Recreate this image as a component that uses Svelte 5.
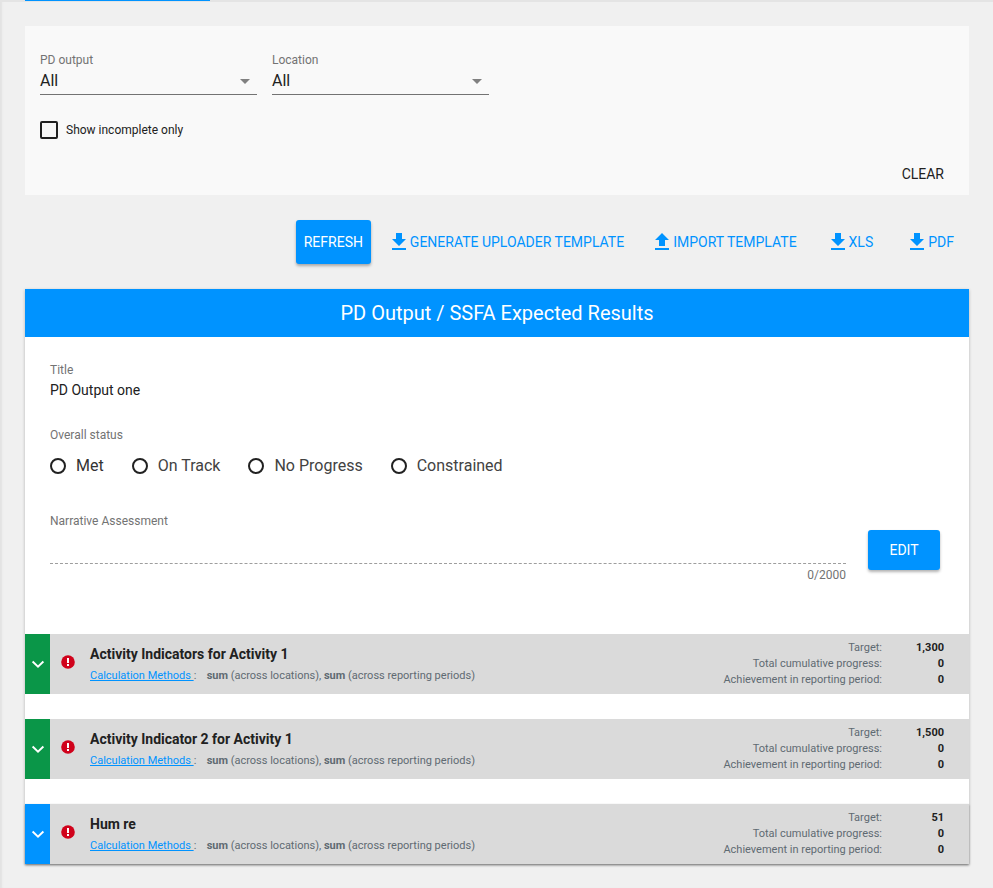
<script>
  const dl = "M19 9h-4V3H9v6H5l7 7 7-7zM5 18v2h14v-2H5z";
  const ul = "M9 16h6v-6h4l-7-7-7 7h4v6zM5 18v2h14v-2H5z";
  const actions = [
    { label: "GENERATE UPLOADER TEMPLATE", d: dl },
    { label: "IMPORT TEMPLATE", d: ul },
    { label: "XLS", d: dl },
    { label: "PDF", d: dl }
  ];
  const statuses = ["Met", "On Track", "No Progress", "Constrained"];
  const rows = [
    { title: "Activity Indicators for Activity 1", target: "1,300", color: "green" },
    { title: "Activity Indicator 2 for Activity 1", target: "1,500", color: "green" },
    { title: "Hum re", target: "51", color: "blue" }
  ];
</script>

<div class="page">
  <div class="topbar"><div class="tab"></div></div>

  <main class="main">
    <section class="filters">
      <div class="selects">
        <div class="select">
          <div class="sel-label">PD output</div>
          <div class="sel-value">All<span class="caret"></span></div>
        </div>
        <div class="select">
          <div class="sel-label">Location</div>
          <div class="sel-value">All<span class="caret"></span></div>
        </div>
      </div>
      <div class="check"><span class="box"></span>Show incomplete only</div>
      <div class="clear-row"><span class="clear">CLEAR</span></div>
    </section>

    <div class="toolbar">
      <button class="raised refresh">REFRESH</button>
      {#each actions as a}
        <span class="action">
          <svg viewBox="0 0 24 24" width="24" height="24"><path d={a.d} fill="currentColor" /></svg>{a.label}
        </span>
      {/each}
    </div>

    <section class="card">
      <header class="card-head">PD Output / SSFA Expected Results</header>
      <div class="card-body">
        <div class="label">Title</div>
        <div class="title-val">PD Output one</div>
        <div class="label status-label">Overall status</div>
        <div class="radios">
          {#each statuses as s}
            <span class="radio"><span class="ring"></span>{s}</span>
          {/each}
        </div>
        <div class="narr">
          <div class="narr-field">
            <div class="label">Narrative Assessment</div>
            <div class="dash"></div>
            <div class="count">0/2000</div>
          </div>
          <button class="raised edit">EDIT</button>
        </div>
      </div>

      <div class="rows">
        {#each rows as r}
          <div class="row">
            <div class="toggle {r.color}">
              <svg viewBox="0 0 14 14" width="14" height="14"><path d="M1.6 4.5 7 9.7l5.4-5.2" fill="none" stroke="#fff" stroke-width="1.9" /></svg>
            </div>
            <svg class="alert" viewBox="0 0 14 14" width="14" height="14">
              <circle cx="7" cy="7" r="6.8" fill="#d0021b" />
              <rect x="6" y="3" width="2" height="5" fill="#fff" />
              <rect x="6" y="9" width="2" height="2" fill="#fff" />
            </svg>
            <div class="info">
              <div class="row-title">{r.title}</div>
              <div class="methods"><span class="link">Calculation Methods&nbsp;</span><span class="colon">:</span><b>sum</b> (across locations), <b>sum</b> (across reporting periods)</div>
            </div>
            <div class="stats">
              <span class="k">Target:</span><span class="v">{r.target}</span>
              <span class="k">Total cumulative progress:</span><span class="v">0</span>
              <span class="k">Achievement in reporting period:</span><span class="v">0</span>
            </div>
          </div>
        {/each}
      </div>
    </section>
  </main>
</div>

<style>
  :global(body) {
    margin: 0;
    background: #f0f0f0;
    font-family: Roboto, "Noto Sans", sans-serif;
    color: #212121;
  }
  .page {
    height: 888px;
    overflow: hidden;
    box-shadow: inset 3px 0 2px -1px #e2e2e2;
  }
  .topbar {
    height: 2px;
    background: #e4e4e4;
    padding-left: 25px;
  }
  .tab {
    width: 185px;
    height: 1px;
    background: #0093ff;
  }
  .main {
    padding: 24px 24px 0 25px;
  }
  .filters {
    height: 169px;
    box-sizing: border-box;
    background: #f9f9f9;
    padding: 27px 25px 0 15px;
    display: flex;
    flex-direction: column;
  }
  .selects {
    display: flex;
    gap: 15px;
  }
  .select {
    width: 217px;
  }
  .sel-label {
    font-size: 12px;
    line-height: 14px;
    color: #737373;
  }
  .sel-value {
    height: 27px;
    line-height: 28px;
    font-size: 16px;
    border-bottom: 1px solid #737373;
    position: relative;
  }
  .caret {
    position: absolute;
    right: 7px;
    top: 12px;
    border-left: 5px solid transparent;
    border-right: 5px solid transparent;
    border-top: 5px solid #808080;
  }
  .check {
    margin-top: 26px;
    display: flex;
    align-items: center;
    font-size: 12px;
    line-height: 18px;
    gap: 8px;
  }
  .box {
    width: 14px;
    height: 14px;
    border: 2px solid #212121;
    border-radius: 2px;
  }
  .clear-row {
    margin-top: 25px;
    text-align: right;
  }
  .clear {
    font-size: 14px;
    line-height: 16px;
  }
  .toolbar {
    margin-top: 25px;
    height: 44px;
    display: flex;
    align-items: center;
    justify-content: flex-end;
  }
  .raised {
    border: 0;
    padding: 0;
    background: #0093ff;
    color: #fff;
    border-radius: 3px;
    font: 14px Roboto, sans-serif;
    box-shadow: 0 2px 3px rgba(0, 0, 0, 0.3);
  }
  .refresh {
    width: 75px;
    height: 44px;
    margin-right: 20px;
  }
  .action {
    display: flex;
    align-items: center;
    color: #0093ff;
    font-size: 14px;
    margin-right: 15px;
  }
  .action:nth-of-type(2) {
    margin-left: 15px;
  }
  .action:nth-of-type(3) {
    margin-left: 18px;
  }
  .action:nth-of-type(4) {
    margin-left: 21px;
  }
  .action svg {
    width: 24px;
    height: 24px;
    margin-right: -1px;
    margin-left: -4px;
  }
  .card {
    margin-top: 25px;
    background: #fff;
    box-shadow: 0 1px 3px rgba(0, 0, 0, 0.25);
  }
  .card-head {
    height: 48px;
    background: #0093ff;
    color: #fff;
    font-size: 20px;
    line-height: 48px;
    text-align: center;
  }
  .card-body {
    padding: 26px 29px 0 25px;
    height: 297px;
    box-sizing: border-box;
  }
  .label {
    font-size: 12px;
    line-height: 14px;
    color: #737373;
  }
  .title-val {
    font-size: 14px;
    line-height: 20px;
    margin-top: 3px;
  }
  .status-label {
    margin-top: 28px;
  }
  .radios {
    display: flex;
    margin-top: 12px;
    font-size: 16px;
    line-height: 24px;
    color: #424242;
  }
  .radio {
    display: flex;
    align-items: center;
    gap: 10px;
    margin-right: 28px;
  }
  .radio:first-child {
    color: #333;
  }
  .ring {
    width: 12px;
    height: 12px;
    border: 2px solid #212121;
    border-radius: 50%;
  }
  .narr {
    display: flex;
    margin-top: 36px;
    align-items: flex-start;
  }
  .narr-field {
    width: 796px;
  }
  .dash {
    margin-top: 35px;
    border-top: 1px dashed #9e9e9e;
  }
  .count {
    margin-top: 4px;
    text-align: right;
    font-size: 12px;
    line-height: 14px;
    color: #737373;
  }
  .edit {
    width: 72px;
    height: 40px;
    margin: 16px 0 0 22px;
  }
  .rows {
    display: flex;
    flex-direction: column;
    gap: 25px;
  }
  .row {
    height: 60px;
    background: #dadada;
    display: flex;
    align-items: center;
  }
  .row:last-child {
    box-shadow: 0 1px 2px rgba(0, 0, 0, 0.4);
  }
  .toggle {
    width: 25px;
    height: 60px;
    display: flex;
    align-items: center;
    justify-content: center;
  }
  .green {
    background: #0a9648;
  }
  .blue {
    background: #0093ff;
  }
  .alert {
    margin: 0 15px 0 11px;
    position: relative;
    top: -2px;
  }
  .info {
    flex: 1;
  }
  .row-title {
    font-size: 14px;
    line-height: 20px;
    font-weight: 700;
    color: #212121;
  }
  .methods {
    margin-top: 4px;
    font-size: 11px;
    line-height: 16px;
    color: #5f6a72;
    white-space: pre-wrap;
  }
  .methods b {
    font-weight: 700;
  }
  .link {
    color: #0093ff;
    text-decoration: underline;
  }
  .colon {
    display: inline-block;
    width: 13px;
  }
  .stats {
    display: grid;
    grid-template-columns: auto 62px;
    font-size: 11px;
    line-height: 16px;
    margin-right: 25px;
    text-align: right;
    color: #5f6a72;
  }
  .v {
    font-weight: 700;
    color: #212121;
  }
</style>
